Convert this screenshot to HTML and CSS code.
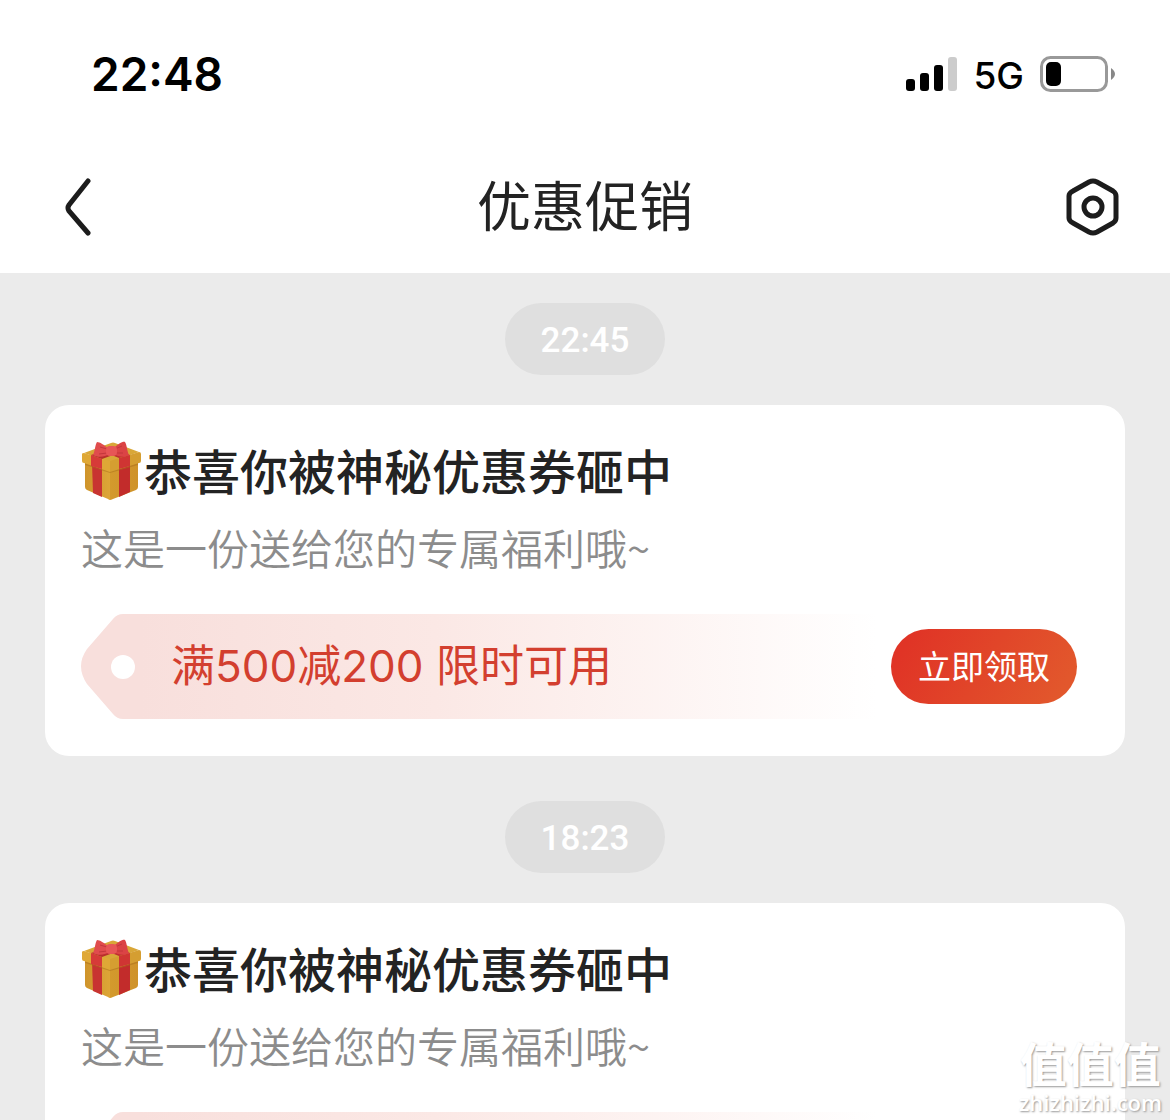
FILE: index.html
```html
<!DOCTYPE html>
<html lang="zh-CN">
<head>
<meta charset="utf-8">
<meta name="viewport" content="width=device-width, initial-scale=1">
<title>优惠促销</title>
<link rel="stylesheet" href="styles.css">
</head>
<body>
<svg class="defs" aria-hidden="true">
  <defs>
    <linearGradient id="gold" x1="0" x2="1"><stop offset="0" stop-color="#cf942b"/><stop offset="1" stop-color="#dda637"/></linearGradient>
    <linearGradient id="goldside" x1="0" x2="1"><stop offset="0" stop-color="#d39a2d"/><stop offset="1" stop-color="#cf922a"/></linearGradient>
    <symbol id="gift" viewBox="0 0 60 60">
      <path d="M4 18 29 27V59Q28 59 27 58L6 49Q4 48 4 46Z" fill="url(#gold)"/>
      <path d="M29 27 57 18V46Q57 48 55 49L32 58Q30 59 29 59Z" fill="url(#goldside)"/>
      <path d="M11 22 21 26V56L12 52Z" fill="#c83431"/>
      <path d="M38 26 49 22V51L38 56Z" fill="#c22c2b"/>
      <path d="M4 24 29 32 57 24V22L29 30 4 22Z" fill="#a86d1c" opacity=".5"/>
      <path d="M3 12 30 2Q32 1 34 2L58 11 29 21Z" fill="#d9a738"/>
      <path d="M1 13Q1 12 3 12L29 20V31L3 22Q1 22 1 20Z" fill="#dfa836"/>
      <path d="M29 20 58 11Q60 11 60 13V20Q60 22 58 22L29 31Z" fill="#d59e31"/>
      <path d="M10 14 21 18V28L10 25Z" fill="#d63b38"/>
      <path d="M38 17 49 14V25L38 28Z" fill="#cf3533"/>
      <path d="M10 14 22 10 32 14 21 18Z" fill="#b92f2d"/>
      <path d="M28 13 38 10 49 14 38 17Z" fill="#bd302e"/>
      <path d="M27 7C23 4 19 1 16 1 14 4 14 10 12 14 17 17 24 16 28 13Z" fill="#e04c4d"/>
      <path d="M33 7C37 3 42 0 44 1 46 4 46 10 48 14 44 17 37 16 33 13Z" fill="#db4345"/>
      <path d="M26 8 19 6M26 12 18 13M34 8 41 5M34 12 42 12" stroke="#c3373c" fill="none"/>
      <rect x="25" y="5" width="11" height="10" rx="4" fill="#e75656"/>
    </symbol>
  </defs>
</svg>
<div class="app">
  <header class="top">
    <div class="status">
      <time class="clock">22:48</time>
      <div class="indicators">
        <svg class="signal" viewBox="0 0 51 34" aria-hidden="true">
          <rect y="22" width="9" height="12" rx="3"/><rect x="14" y="16" width="9" height="18" rx="3"/><rect x="28" y="8" width="9" height="26" rx="3"/><rect x="42" width="9" height="34" rx="3" fill="#ccc"/>
        </svg>
        <span class="network">5G</span>
        <svg class="battery" viewBox="0 0 76 36" aria-hidden="true">
          <rect x="1.5" y="1.5" width="65" height="33" rx="9" fill="none" stroke="#999" stroke-width="3"/>
          <rect x="6" y="6" width="15" height="24" rx="5"/>
          <path d="M71 12Q75 15 75 18 75 21 71 24Z" fill="#888"/>
        </svg>
      </div>
    </div>
    <nav class="bar">
      <button class="icon" type="button" aria-label="返回">
        <svg viewBox="0 0 60 60" aria-hidden="true"><path d="M41 3 22 27Q20 30 22 33L41 55" fill="none" stroke="#1c1c1c" stroke-width="5" stroke-linecap="round"/></svg>
      </button>
      <h1>优惠促销</h1>
      <button class="icon" type="button" aria-label="设置">
        <svg viewBox="0 0 60 60" aria-hidden="true"><path d="M30 3Q32 3 34 4L50 13Q53 15 53 18V40Q53 43 50 45L34 54Q30 56 26 54L10 45Q6 43 6 40V18Q6 15 10 13L26 4Q28 3 30 3Z" fill="none" stroke="#1c1c1c" stroke-width="5"/><circle cx="30" cy="29" r="9" fill="none" stroke="#1c1c1c" stroke-width="5"/></svg>
      </button>
    </nav>
  </header>
  <main class="feed">
    <section class="message">
      <time class="stamp">22:45</time>
      <article class="card">
        <h2><svg class="gift" role="img" aria-label="礼物"><use href="#gift"/></svg><span class="headline">恭喜你被神秘优惠券砸中</span></h2>
        <p class="desc">这是一份送给您的专属福利哦~</p>
        <div class="coupon">
          <svg class="tip" viewBox="0 0 60 105" aria-hidden="true"><path d="M60 0H42Q36 0 32 5L6 35Q-6 52 6 70L32 100Q36 105 42 105H60Z" fill="#f8dfdc"/><circle cx="42" cy="53" r="12" fill="#fff"/></svg>
          <span class="offer">满500减200 限时可用</span>
          <button class="claim" type="button">立即领取</button>
        </div>
      </article>
    </section>
    <section class="message">
      <time class="stamp">18:23</time>
      <article class="card">
        <h2><svg class="gift" role="img" aria-label="礼物"><use href="#gift"/></svg><span class="headline">恭喜你被神秘优惠券砸中</span></h2>
        <p class="desc">这是一份送给您的专属福利哦~</p>
        <div class="coupon">
          <svg class="tip" viewBox="0 0 60 105" aria-hidden="true"><path d="M60 0H42Q36 0 32 5L6 35Q-6 52 6 70L32 100Q36 105 42 105H60Z" fill="#f8dfdc"/><circle cx="42" cy="53" r="12" fill="#fff"/></svg>
          <span class="offer">满500减200 限时可用</span>
          <button class="claim" type="button">立即领取</button>
        </div>
      </article>
    </section>
  </main>
  <div class="watermark"><span class="brand">值值值</span><span class="site">zhizhizhi.com</span></div>
</div>
</body>
</html>
```

FILE: styles.css
```css
* { box-sizing: border-box; }
body {
  margin: 0;
  background: #ebebeb;
  color: #232323;
  font-family: "Noto Sans CJK SC", sans-serif;
}
h1, h2, p { margin: 0; }
button { border: 0; padding: 0; font: inherit; cursor: pointer; }
.defs { position: absolute; width: 0; height: 0; }
.app {
  position: relative;
  display: flex;
  flex-direction: column;
  height: 100vh;
  overflow: hidden;
}
.top { flex: none; background: #fff; }
.status {
  display: flex;
  align-items: center;
  justify-content: space-between;
  height: 142px;
  padding: 6px 54px 0 91px;
  color: #000;
  font-family: Inter, sans-serif;
}
.clock { font-size: 46px; font-weight: 600; }
.indicators { display: flex; align-items: center; }
.signal { width: 51px; height: 34px; }
.network { margin: 0 16px; padding-top: 2px; font-size: 37px; font-weight: 500; }
.battery { width: 76px; height: 36px; }
.bar {
  display: flex;
  align-items: center;
  justify-content: space-between;
  height: 131px;
  padding: 0 47px;
}
.icon { width: 60px; height: 60px; background: none; }
.icon svg { display: block; width: 60px; height: 60px; }
h1 { padding-bottom: 8px; font-size: 54px; font-weight: 400; line-height: 80px; }
.feed {
  flex: 1;
  min-height: 0;
  overflow-y: auto;
  scrollbar-width: none;
  padding: 30px 45px 45px;
  display: flex;
  flex-direction: column;
  gap: 45px;
}
.message {
  flex: none;
  display: flex;
  flex-direction: column;
  align-items: center;
  gap: 30px;
}
.stamp {
  height: 72px;
  padding: 0 36px;
  border-radius: 36px;
  background: #dfdfdf;
  color: #fff;
  font: 500 35px/76px Roboto, sans-serif;
}
.card {
  width: 100%;
  padding: 36px 36px 37px;
  border-radius: 24px;
  background: #fff;
}
h2 {
  display: flex;
  align-items: center;
  gap: 3px;
  height: 60px;
  font-size: 48px;
  font-weight: 500;
  line-height: 60px;
}
.headline { padding-bottom: 4px; }
.gift { flex: none; width: 60px; height: 60px; }
.desc {
  margin: 16px 0 37px;
  color: #8c8c8c;
  font-size: 42px;
  font-weight: 350;
  line-height: 60px;
}
.coupon {
  display: flex;
  align-items: center;
  height: 105px;
  padding-right: 12px;
}
.tip { flex: none; width: 60px; height: 105px; }
.offer {
  flex: 1;
  margin-right: 14px;
  padding-left: 30px;
  background: linear-gradient(90deg, #f8dfdc, #fbe8e5 40%, #fff);
  color: #d33f2f;
  font: 400 44px/105px Inter, "Noto Sans CJK SC", sans-serif;
}
.claim {
  width: 186px;
  height: 75px;
  padding-bottom: 4px;
  border-radius: 38px;
  background: linear-gradient(120deg, #e03426 10%, #e2572c 90%);
  color: #fff;
  font-size: 33px;
}
.watermark {
  position: absolute;
  right: 8px;
  bottom: 6px;
  display: flex;
  flex-direction: column;
  align-items: center;
  color: #fff;
  text-shadow: 1px 1px 2px #999;
}
.brand { font-size: 47px; font-weight: 700; line-height: 56px; }
.site { font: 600 22px/24px "Open Sans", sans-serif; }
```
